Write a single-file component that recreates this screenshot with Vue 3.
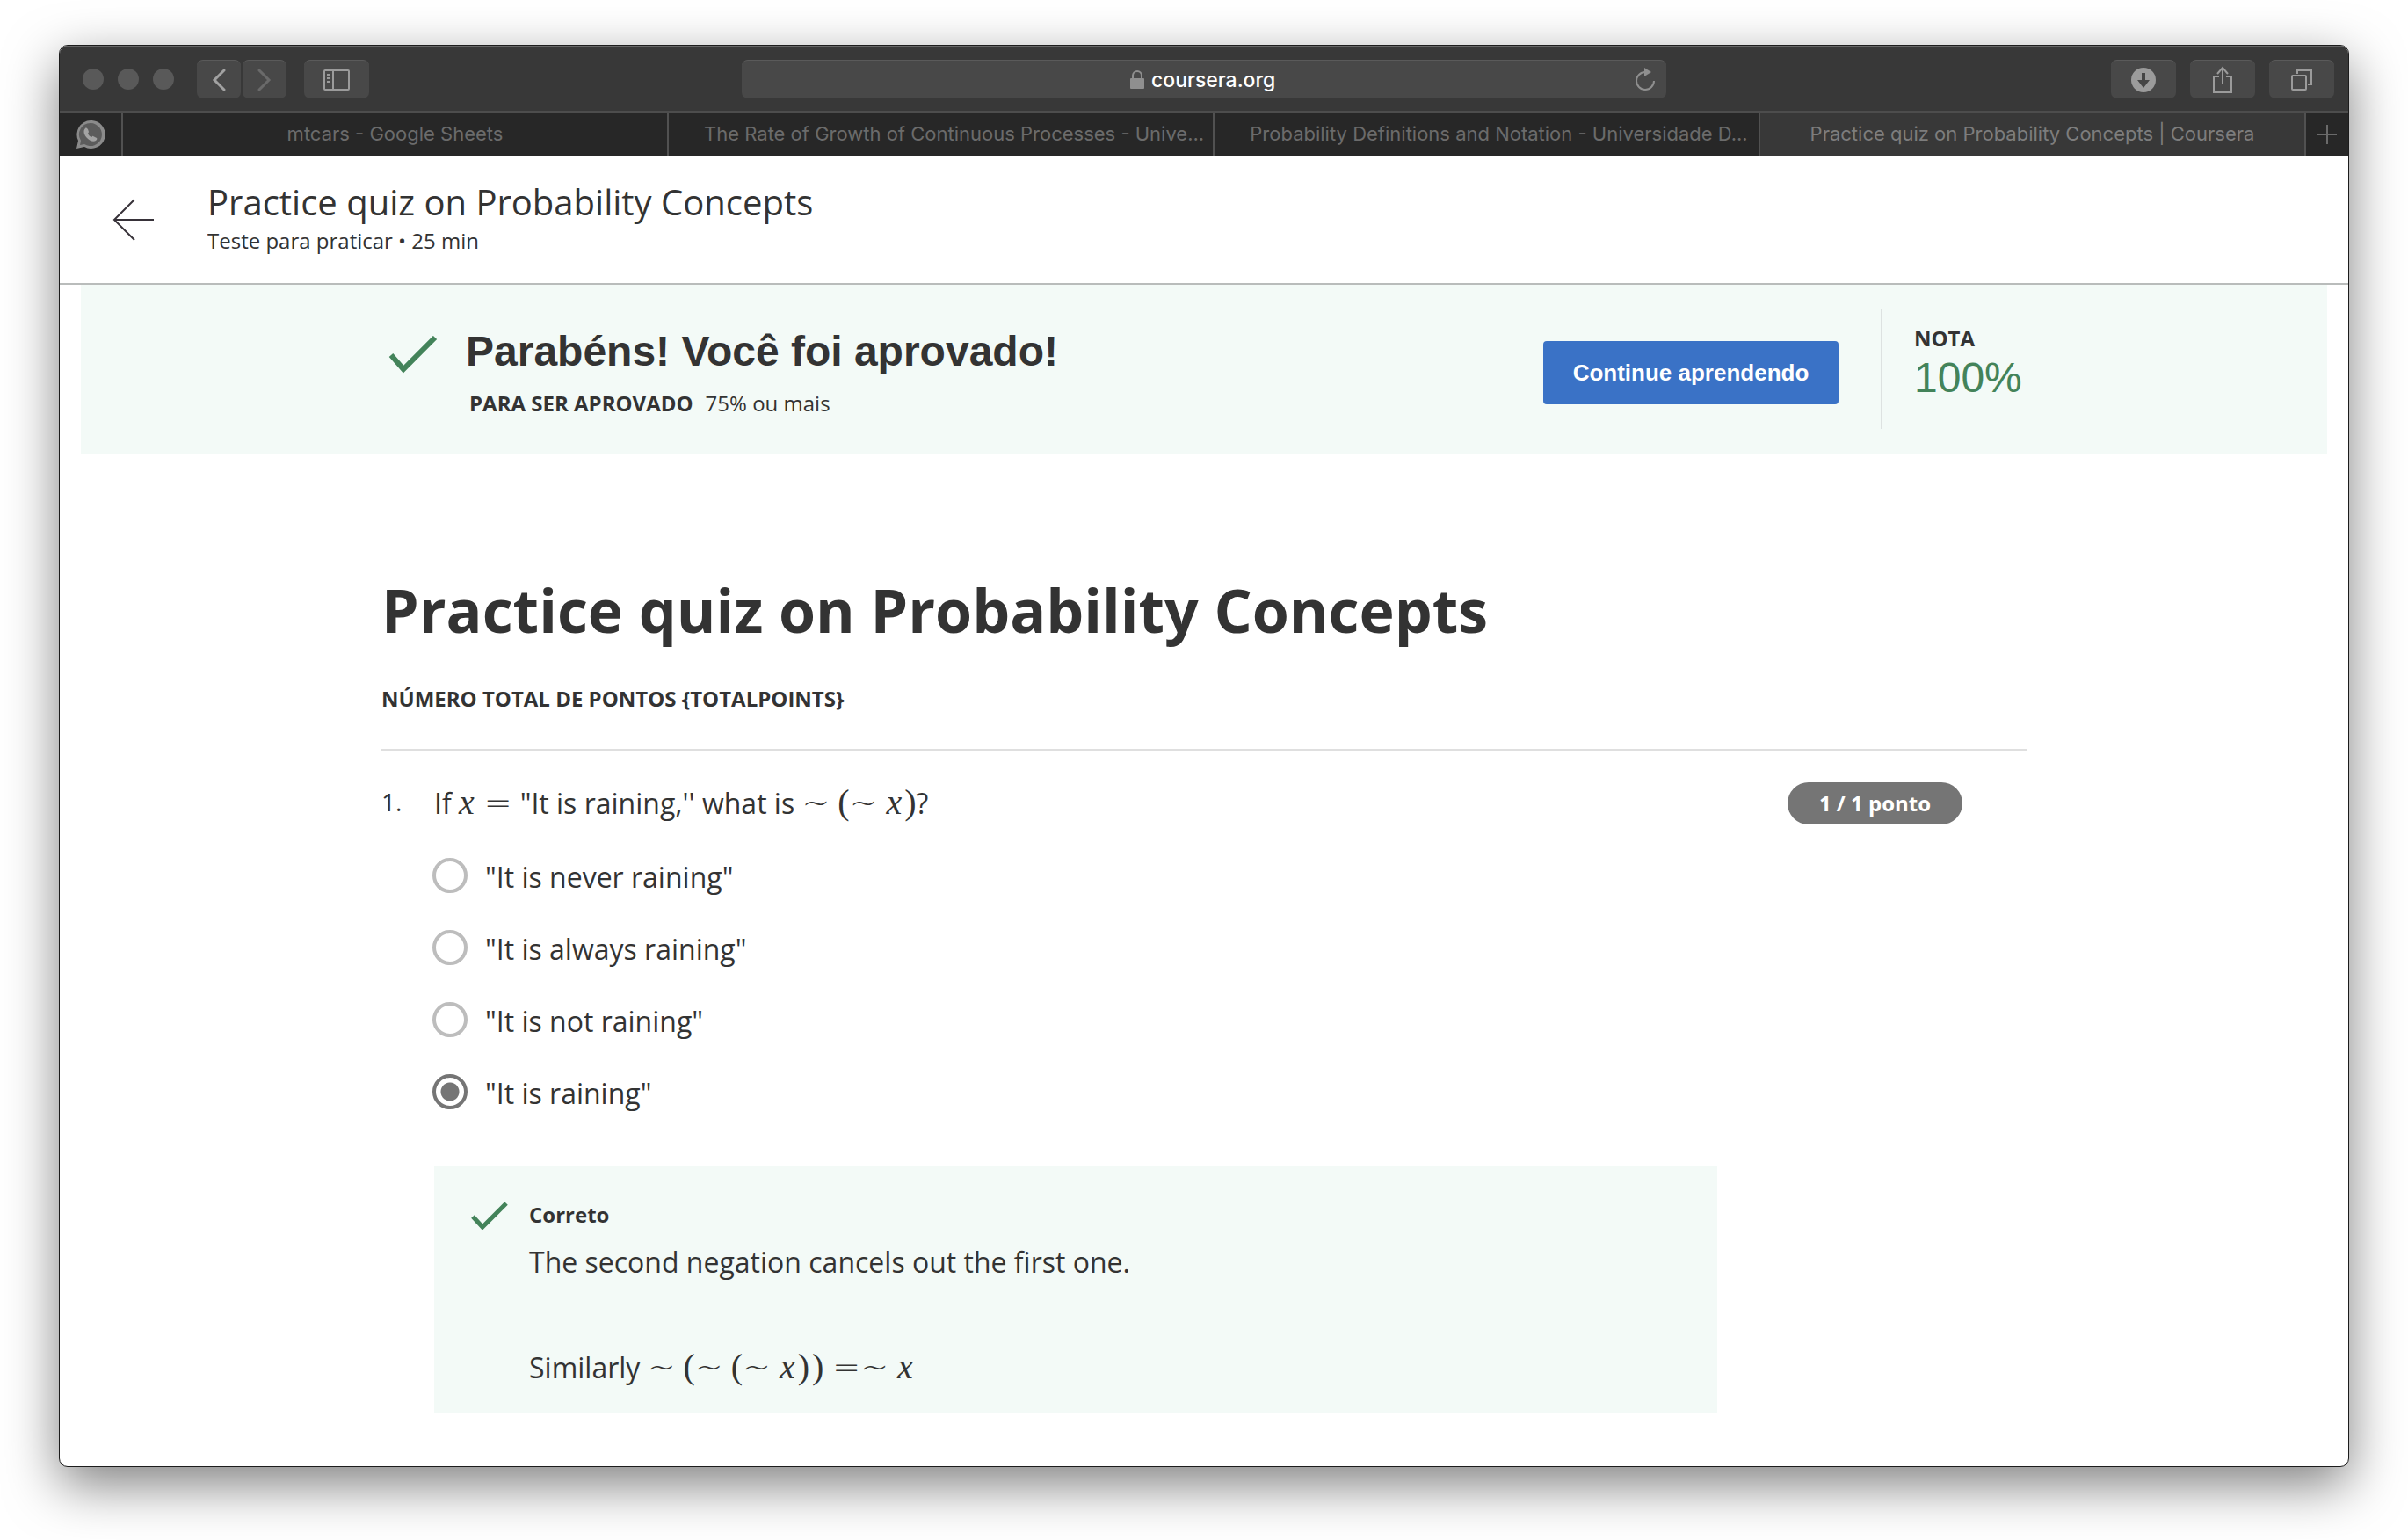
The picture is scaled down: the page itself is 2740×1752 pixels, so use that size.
<script setup>
import { ref } from 'vue'

const tabs = [
  { title: 'mtcars - Google Sheets' },
  { title: 'The Rate of Growth of Continuous Processes - Unive...', long: true },
  { title: 'Probability Definitions and Notation - Universidade D...', long: true },
  { title: 'Practice quiz on Probability Concepts | Coursera', active: true },
]

const options = ['"It is never raining"', '"It is always raining"', '"It is not raining"', '"It is raining"']
const answer = ref(options[3])
</script>

<template>
  <div class="desktop">
    <div class="window">
      <header class="toolbar">
        <div class="tools">
          <div class="lights"><i></i><i></i><i></i></div>
          <div class="history">
            <button class="tool narrow" aria-label="Voltar">
              <svg width="16" height="28" viewBox="0 0 16 28"><path d="M14 3 3 14l11 11" fill="none" stroke="#a2a2a2" stroke-width="3" stroke-linecap="round" /></svg>
            </button>
            <button class="tool narrow" aria-label="Avançar">
              <svg width="16" height="28" viewBox="0 0 16 28"><path d="M2 3l11 11L2 25" fill="none" stroke="#6a6a6a" stroke-width="3" stroke-linecap="round" /></svg>
            </button>
          </div>
          <button class="tool" aria-label="Barra lateral">
            <svg width="32" height="26" viewBox="0 0 32 26" fill="none" stroke="#9b9b9b" stroke-width="2">
              <rect x="2" y="2" width="28" height="22" rx="1" />
              <path d="M12 2v22M5 7h4M5 11h4M5 15h4" />
            </svg>
          </button>
        </div>

        <div class="address">
          <label class="site">
            <svg width="16" height="22" viewBox="0 0 16 22" aria-hidden="true">
              <path d="M3 10V6a5 5 0 0 1 10 0v4" fill="none" stroke="#8f8f8f" stroke-width="2" />
              <rect x="0" y="9" width="16" height="12" rx="1" fill="#8f8f8f" />
            </svg>
            <input class="url" type="text" value="coursera.org" aria-label="Endereço" />
          </label>
          <button class="reload" aria-label="Recarregar">
            <svg width="24" height="28" viewBox="0 0 24 28">
              <path d="M12 5a10 10 0 1 0 10 10" fill="none" stroke="#8f8f8f" stroke-width="2" />
              <path d="M11 0v10l8-5z" fill="#8f8f8f" />
            </svg>
          </button>
        </div>

        <div class="tools end">
          <button class="tool" aria-label="Transferências">
            <svg width="28" height="28" viewBox="0 0 28 28">
              <circle cx="14" cy="14" r="14" fill="#9b9b9b" />
              <path d="M12 6h4v8h5l-7 9-7-9h5z" fill="#454545" />
            </svg>
          </button>
          <button class="tool" aria-label="Compartilhar">
            <svg width="24" height="32" viewBox="0 0 24 32" fill="none" stroke="#9b9b9b" stroke-width="2">
              <path d="M8 12H2v18h20V12h-6M12 21V2M6 9l6-7 6 7" />
            </svg>
          </button>
          <button class="tool" aria-label="Mostrar abas">
            <svg width="26" height="26" viewBox="0 0 26 26" fill="none" stroke="#9b9b9b" stroke-width="2">
              <rect x="2" y="8" width="16" height="16" rx="1" />
              <path d="M8 6V2h16v16h-4" />
            </svg>
          </button>
        </div>
      </header>

      <nav class="tabs">
        <button class="pinned" aria-label="WhatsApp">
          <svg width="32" height="32" viewBox="0 0 32 32">
            <path d="M16 0a16 16 0 1 1-7 30L0 32l2-9A16 16 0 0 1 16 0z" fill="#8b8b8b" />
            <path d="M16 3a13 13 0 1 1-7 24l-5 1 1-5A13 13 0 0 1 16 3z" fill="#5c5c5c" />
            <path d="M10 9c1-1 2 0 3 1l1 3c0 1-1 1-1 2 1 2 2 3 4 4 1 0 1-2 2-1l4 2c1 1 0 2-1 3-3 2-7 0-10-3s-5-8-2-11z" fill="#a3a3a3" />
          </svg>
        </button>
        <button v-for="tab in tabs" :key="tab.title" class="tab" :class="{ active: tab.active, long: tab.long }">
          {{ tab.title }}
        </button>
        <button class="new-tab" aria-label="Nova aba">
          <svg width="24" height="24" viewBox="0 0 24 24"><path d="M12 1v22M1 12h22" stroke="#6a6a6a" stroke-width="2" /></svg>
        </button>
      </nav>

      <main class="page">
        <div class="course-bar">
          <a class="back" href="#" aria-label="Voltar ao curso">
            <svg width="48" height="48" viewBox="0 0 48 48"><path d="M47 24H2M25 1 2 24l23 23" fill="none" stroke="#373239" stroke-width="2" /></svg>
          </a>
          <div class="course">
            <div class="course-title">Practice quiz on Probability Concepts</div>
            <div class="course-meta">Teste para praticar • 25 min</div>
          </div>
        </div>

        <section class="banner">
          <div class="banner-row">
            <svg class="banner-check" width="56" height="44" viewBox="0 0 56 44"><path d="M3 22l14 16L53 2" fill="none" stroke="#43835a" stroke-width="6" /></svg>
            <div class="result">
              <h2>Parabéns! Você foi aprovado!</h2>
              <p><strong>PARA SER APROVADO</strong><span>75% ou mais</span></p>
            </div>
            <button class="continue">Continue aprendendo</button>
            <div class="grade">
              <div class="grade-label">NOTA</div>
              <div class="grade-value">100%</div>
            </div>
          </div>
        </section>

        <article class="quiz">
          <h1>Practice quiz on Probability Concepts</h1>
          <h3>NÚMERO TOTAL DE PONTOS {TOTALPOINTS}</h3>

          <div class="question">
            <div class="number">1.</div>
            <div class="body">
              <div class="prompt">
                If <span class="math"><i>x</i><b class="rel">=</b></span>"It is raining,'' what is
                <span class="math"><b>~</b><em>(</em><b>~</b><i class="arg">x</i><em class="close">)</em></span>?
              </div>
              <label v-for="option in options" :key="option" class="option">
                <input v-model="answer" type="radio" name="answer" :value="option" />
                <span>{{ option }}</span>
              </label>
              <div class="feedback">
                <svg width="42" height="32" viewBox="0 0 42 32"><path d="M2 17l11 12L40 2" fill="none" stroke="#43835a" stroke-width="5" /></svg>
                <div>
                  <div class="verdict">Correto</div>
                  <p>The second negation cancels out the first one.</p>
                  <p class="similarly">
                    Similarly
                    <span class="math"><b>~</b><em>(</em><b>~</b><em>(</em><b>~</b><i class="arg">x</i><em class="close">)</em><em class="close">)</em><b class="eq">=</b><b>~</b><i class="arg">x</i></span>
                  </p>
                </div>
              </div>
            </div>
            <div class="points">1 / 1 ponto</div>
          </div>
        </article>
      </main>
    </div>
  </div>
</template>

<style>
body {
  background: #fff;
}
</style>

<style scoped>
* {
  box-sizing: border-box;
}
h1, h2, h3, p {
  margin: 0;
}
button {
  border: 0;
  padding: 0;
  font: inherit;
  color: inherit;
  background: none;
}
svg {
  display: block;
  flex: none;
}
.desktop {
  overflow: hidden;
  min-height: 100vh;
  padding: 51px 67px 40px;
  font-family: "Open Sans", sans-serif;
  color: #333;
}
.window {
  border: 1px solid #1c1c1c;
  border-radius: 10px;
  overflow: hidden;
  background: #fff;
  box-shadow: 0 20px 60px rgba(0, 0, 0, 0.5);
}
.toolbar {
  display: grid;
  grid-template-columns: 1fr minmax(0, 1052px) 1fr;
  align-items: center;
  height: 76px;
  padding: 0 16px;
  border-top: 2px solid #666;
  border-bottom: 2px solid #4d4d4d;
  background: #383838;
}
.tools {
  display: flex;
  align-items: center;
  gap: 16px;
}
.tools.end {
  justify-content: flex-end;
}
.lights {
  display: flex;
  gap: 16px;
  padding: 0 10px;
}
.lights i {
  width: 24px;
  height: 24px;
  border-radius: 50%;
  background: #595959;
}
.history {
  display: flex;
  gap: 2px;
  margin-right: 4px;
}
.tool {
  display: flex;
  align-items: center;
  justify-content: center;
  width: 74px;
  height: 44px;
  border-radius: 7px;
  border-top: 1px solid #5a5a5a;
  background: #484848;
}
.tool.narrow {
  width: 50px;
}
.address {
  display: flex;
  align-items: center;
  height: 44px;
  padding: 0 12px 0 36px;
  border-radius: 7px;
  border-top: 1px solid #5a5a5a;
  background: #484848;
}
.site {
  flex: 1;
  display: flex;
  align-items: center;
  justify-content: center;
  gap: 8px;
}
.url {
  width: 144px;
  height: 32px;
  padding: 0;
  border: 0;
  background: none;
  color: #fff;
  font: 500 23px/32px Inter, sans-serif;
}
.tabs {
  display: grid;
  grid-template-columns: 70px repeat(4, minmax(0, 1fr)) 50px;
  height: 50px;
  border-bottom: 1px solid #000;
  background: #272727;
  font: 22px/28px Inter, sans-serif;
  color: #6b6b6b;
}
.pinned,
.new-tab {
  display: flex;
  align-items: center;
  justify-content: center;
}
.tab {
  padding: 0 20px 2px;
  border-left: 2px solid #515151;
  white-space: nowrap;
}
.tab.long {
  padding-left: 40px;
  padding-right: 12px;
}
.tab.active {
  background: #383838;
  color: #7d7d7d;
}
.new-tab {
  border-left: 2px solid #515151;
}
.course-bar {
  display: flex;
  align-items: center;
  gap: 60px;
  height: 146px;
  padding: 0 60px;
  border-bottom: 2px solid #b9bcbb;
}
.course {
  padding-bottom: 6px;
}
.course-title {
  font-size: 40px;
  line-height: 54px;
}
.course-meta {
  font-size: 24px;
  line-height: 34px;
}
.banner {
  margin: 0 24px;
  background: #f3faf7;
}
.banner-row {
  display: flex;
  align-items: flex-start;
  max-width: 1872px;
  margin: 0 auto;
  padding: 28px 0;
}
.banner-check {
  margin: 30px 32px 0 8px;
}
.result {
  flex: 1;
  padding-top: 20px;
}
.result h2 {
  font: bold 48px/56px "Liberation Sans", sans-serif;
}
.result p {
  display: flex;
  gap: 14px;
  padding: 14px 0 0 4px;
  font-size: 24px;
  line-height: 34px;
}
.continue {
  width: 336px;
  height: 72px;
  margin: 36px 48px 0 0;
  border-radius: 4px;
  background: #3a72c6;
  color: #fff;
  font: bold 26px/32px "Liberation Sans", sans-serif;
}
.grade {
  width: 166px;
  height: 136px;
  padding: 16px 0 0 36px;
  border-left: 2px solid #dde2e1;
}
.grade-label {
  font-size: 24px;
  font-weight: 700;
  line-height: 34px;
}
.grade-value {
  font: 48px/56px "Liberation Sans", sans-serif;
  color: #43835a;
}
.quiz {
  max-width: 1872px;
  margin: 0 auto;
  padding: 130px 0 60px;
}
.quiz h1 {
  font-size: 68px;
  line-height: 96px;
}
.quiz h3 {
  padding: 36px 0 40px;
  border-bottom: 2px solid #dfdfdf;
  font-size: 24px;
  line-height: 34px;
}
.question {
  display: flex;
  align-items: flex-start;
  padding-top: 36px;
}
.number {
  width: 60px;
  font-size: 28px;
  line-height: 44px;
}
.body {
  width: 1460px;
  font-size: 32px;
  line-height: 48px;
}
.prompt {
  height: 84px;
}
.math {
  white-space: nowrap;
}
.math i {
  font: italic 40px/32px "Liberation Serif", serif;
}
.math b {
  font: 200 38px/32px "DejaVu Sans", sans-serif;
}
.math em {
  margin-left: 9px;
  font: 40px/32px "Liberation Serif", serif;
}
.math .close {
  margin-left: 3px;
}
.math .arg {
  margin-left: 10px;
}
.math .rel {
  margin: 0 9px 0 11px;
}
.math .eq {
  margin-left: 10px;
}
.option {
  display: flex;
  align-items: flex-start;
  gap: 20px;
  height: 82px;
}
.option input {
  appearance: none;
  width: 40px;
  height: 40px;
  margin: 2px 0 0 -2px;
  border: 4px solid #bdbdbd;
  border-radius: 50%;
}
.option input:checked {
  border-color: #757575;
  background: radial-gradient(circle, #757575 10px, transparent 11px);
}
.feedback {
  display: flex;
  align-items: flex-start;
  gap: 24px;
  margin-top: 25px;
  padding: 36px 42px 28px;
  background: #f3faf7;
}
.feedback svg {
  margin-top: 4px;
}
.verdict {
  padding-bottom: 11px;
  font-size: 24px;
  font-weight: 700;
  line-height: 38px;
}
.similarly {
  padding-top: 72px;
}
.feedback p {
  line-height: 48px;
}
.points {
  margin: 0 73px 0 auto;
  width: 199px;
  border-radius: 24px;
  background: #757575;
  color: #fff;
  text-align: center;
  font-size: 24px;
  font-weight: 700;
  line-height: 48px;
}
</style>
